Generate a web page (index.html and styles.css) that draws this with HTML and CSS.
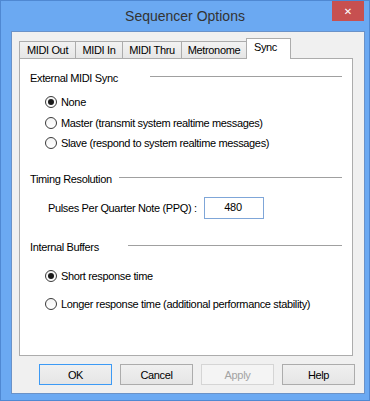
FILE: index.html
```html
<!DOCTYPE html>
<html lang="en">
<head>
    <meta charset="UTF-8">
    <title>Sequencer Options</title>
    <link rel="stylesheet" href="styles.css">
</head>
<body>
    <div class="window">
        <div class="titlebar">
            <span class="title">Sequencer Options</span>
            <button class="close-btn">&#x2715;</button>
        </div>

        <div class="client">
            <div class="tabs">
                <div class="tab tab-out">MIDI Out</div>
                <div class="tab tab-in">MIDI In</div>
                <div class="tab tab-thru">MIDI Thru</div>
                <div class="tab tab-metro">Metronome</div>
                <div class="tab tab-sync active">Sync</div>
            </div>

            <div class="panel">
                <div class="group-head">
                    <span>External MIDI Sync</span>
                    <i class="rule rule-sync"></i>
                </div>
                <div class="radio-list">
                    <label class="opt"><span class="radio checked"></span>None</label>
                    <label class="opt"><span class="radio"></span>Master (transmit system realtime messages)</label>
                    <label class="opt"><span class="radio"></span>Slave (respond to system realtime messages)</label>
                </div>

                <div class="group-head head-timing">
                    <span>Timing Resolution</span>
                    <i class="rule rule-timing"></i>
                </div>
                <div class="ppq-row">
                    <span class="ppq-label">Pulses Per Quarter Note (PPQ) :</span>
                    <div class="ppq-input">480</div>
                </div>

                <div class="group-head head-buffers">
                    <span>Internal Buffers</span>
                    <i class="rule rule-buffers"></i>
                </div>
                <div class="radio-list loose">
                    <label class="opt"><span class="radio checked"></span>Short response time</label>
                    <label class="opt"><span class="radio"></span>Longer response time (additional performance stability)</label>
                </div>
            </div>

            <div class="buttons">
                <button class="btn default">OK</button>
                <button class="btn">Cancel</button>
                <button class="btn" disabled>Apply</button>
                <button class="btn">Help</button>
            </div>
        </div>
    </div>
</body>
</html>
```

FILE: styles.css
```css
* {
    margin: 0;
    padding: 0;
    box-sizing: border-box;
}

body {
    font-family: "Liberation Sans", Arial, sans-serif;
    font-size: 11px;
    letter-spacing: -0.35px;
    color: #000;
    background: #fff;
}

.window {
    width: 370px;
    height: 401px;
    border: 1px solid #4f88d2;
    background-color: #6ba9f2;
    padding: 0 4px 6px 10px;
    display: flex;
    flex-direction: column;
}

/* Title bar */
.titlebar {
    height: 30px;
    margin-left: -10px;
    margin-right: -4px;
    display: grid;
    grid-template-columns: 1fr auto 1fr;
    align-items: start;
}

.title {
    grid-column: 2;
    font-size: 14px;
    letter-spacing: 0;
    color: #333;
    line-height: 30px;
}

.close-btn {
    grid-column: 3;
    justify-self: end;
    width: 32px;
    height: 20px;
    margin-right: 5px;
    border: none;
    background-color: #c75050;
    color: #fff;
    font-family: "DejaVu Sans", sans-serif;
    font-size: 10px;
    font-weight: bold;
}

/* Client area */
.client {
    flex: 1;
    background-color: #f0f0f0;
    border: 1px solid #6a92c8;
    padding: 6px 0 0 7px;
}

.tabs {
    display: flex;
    align-items: flex-end;
    height: 20px;
}

.tab {
    height: 17px;
    border: 1px solid #acacac;
    border-bottom: none;
    margin-right: -1px;
    background: linear-gradient(#f2f2f2, #e6e6e6);
    text-align: center;
    line-height: 16px;
}

.tab-out { width: 57px; }
.tab-in { width: 48px; }
.tab-thru { width: 60px; }
.tab-metro { width: 66px; }
.tab-sync { width: 45px; }

.tab.active {
    height: 21px;
    margin-bottom: -1px;
    background: #fff;
    position: relative;
    z-index: 1;
    line-height: 17px;
    padding-right: 6px;
}

.panel {
    width: 334px;
    height: 298px;
    background-color: #fff;
    border: 1px solid #acacac;
    padding: 12px 10px 0 10px;
}

/* Group headers */
.group-head {
    display: flex;
    height: 14px;
    line-height: 14px;
}

.rule {
    margin-left: auto;
    margin-top: 5px;
    height: 1px;
    background-color: #a0a0a0;
}

.rule-sync { width: 192px; }
.rule-timing { width: 223px; }
.rule-buffers { width: 214px; }

.head-timing { margin-top: 18.5px; }
.head-buffers { margin-top: 21px; }

/* Radios */
.radio-list {
    display: flex;
    flex-direction: column;
    gap: 0.5px;
    margin-top: 7px;
    padding-left: 15px;
}

.radio-list.loose {
    gap: 8px;
    margin-top: 12px;
}

.opt {
    display: flex;
    align-items: center;
    height: 20px;
}

.radio {
    width: 12px;
    height: 12px;
    border: 1px solid #3a3a3a;
    border-radius: 50%;
    background: linear-gradient(#f4f4f4, #fff);
    margin-right: 4px;
    display: flex;
    align-items: center;
    justify-content: center;
}

.radio.checked::after {
    content: "";
    width: 6px;
    height: 6px;
    border-radius: 50%;
    background-color: #1a1a1a;
}

/* PPQ */
.ppq-row {
    display: flex;
    align-items: center;
    height: 22px;
    margin-top: 11px;
    padding-left: 18px;
}

.ppq-label {
    width: 156px;
}

.ppq-input {
    width: 60px;
    height: 22px;
    border: 1px solid #7fa6d8;
    text-align: center;
    line-height: 19px;
    padding-right: 2px;
}

/* Dialog buttons */
.buttons {
    display: flex;
    gap: 8px;
    margin-top: 8px;
    padding-left: 20px;
}

.btn {
    width: 73px;
    height: 21px;
    border: 1px solid #acacac;
    background: linear-gradient(#f0f0f0, #e5e5e5);
    font-family: "Liberation Sans", Arial, sans-serif;
    font-size: 11px;
    letter-spacing: -0.35px;
    color: #000;
}

.btn.default {
    border-color: #3c9af5;
}

.btn:disabled {
    border-color: #d5d5d5;
    background: #f4f4f4;
    color: #a3a3a3;
}
```
